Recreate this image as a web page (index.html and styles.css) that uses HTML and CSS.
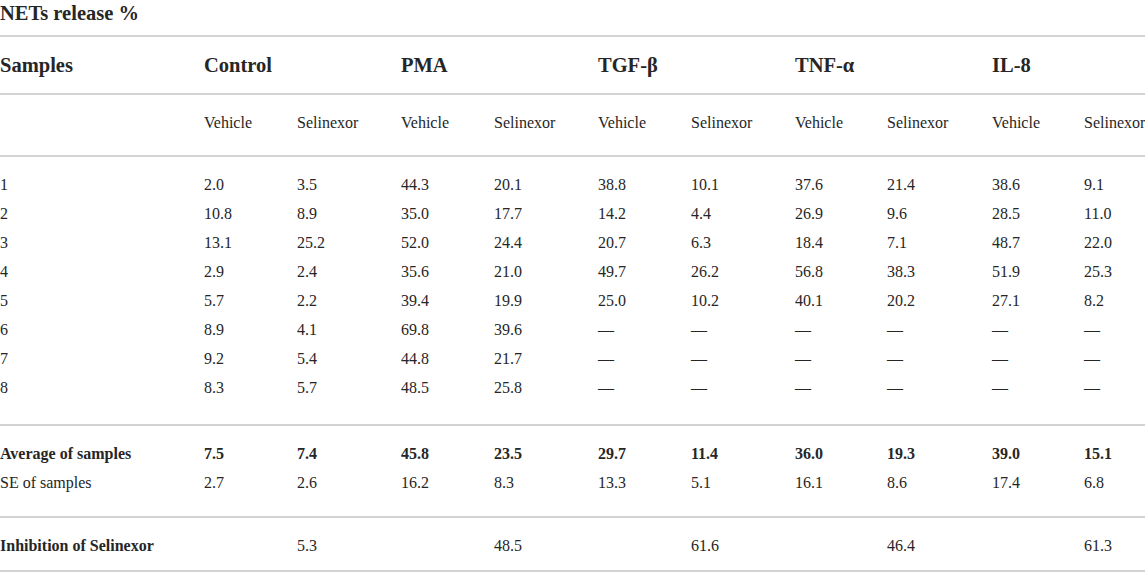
FILE: index.html
```html
<!DOCTYPE html>
<html>
<head>
<meta charset="utf-8">
<link rel="stylesheet" href="styles.css">
</head>
<body>
<div class="wrap">
  <div class="title">NETs release %</div>
  <table class="tbl">
    <colgroup>
      <col class="c0"><col class="cv"><col class="cs"><col class="cv"><col class="cs"><col class="cv"><col class="cs"><col class="cv2"><col class="cs2"><col class="cv2"><col class="clast">
    </colgroup>
    <thead>
      <tr class="head">
        <th>Samples</th>
        <th colspan="2">Control</th>
        <th colspan="2">PMA</th>
        <th colspan="2">TGF-β</th>
        <th colspan="2">TNF-α</th>
        <th colspan="2">IL-8</th>
      </tr>
      <tr class="sub">
        <td></td>
        <td>Vehicle</td><td>Selinexor</td>
        <td>Vehicle</td><td>Selinexor</td>
        <td>Vehicle</td><td>Selinexor</td>
        <td>Vehicle</td><td>Selinexor</td>
        <td>Vehicle</td><td>Selinexor</td>
      </tr>
    </thead>
    <tbody class="grp data">
      <tr class="first"><td>1</td><td>2.0</td><td>3.5</td><td>44.3</td><td>20.1</td><td>38.8</td><td>10.1</td><td>37.6</td><td>21.4</td><td>38.6</td><td>9.1</td></tr>
      <tr><td>2</td><td>10.8</td><td>8.9</td><td>35.0</td><td>17.7</td><td>14.2</td><td>4.4</td><td>26.9</td><td>9.6</td><td>28.5</td><td>11.0</td></tr>
      <tr><td>3</td><td>13.1</td><td>25.2</td><td>52.0</td><td>24.4</td><td>20.7</td><td>6.3</td><td>18.4</td><td>7.1</td><td>48.7</td><td>22.0</td></tr>
      <tr><td>4</td><td>2.9</td><td>2.4</td><td>35.6</td><td>21.0</td><td>49.7</td><td>26.2</td><td>56.8</td><td>38.3</td><td>51.9</td><td>25.3</td></tr>
      <tr><td>5</td><td>5.7</td><td>2.2</td><td>39.4</td><td>19.9</td><td>25.0</td><td>10.2</td><td>40.1</td><td>20.2</td><td>27.1</td><td>8.2</td></tr>
      <tr><td>6</td><td>8.9</td><td>4.1</td><td>69.8</td><td>39.6</td><td>—</td><td>—</td><td>—</td><td>—</td><td>—</td><td>—</td></tr>
      <tr><td>7</td><td>9.2</td><td>5.4</td><td>44.8</td><td>21.7</td><td>—</td><td>—</td><td>—</td><td>—</td><td>—</td><td>—</td></tr>
      <tr class="last"><td>8</td><td>8.3</td><td>5.7</td><td>48.5</td><td>25.8</td><td>—</td><td>—</td><td>—</td><td>—</td><td>—</td><td>—</td></tr>
    </tbody>
    <tbody class="grp stats">
      <tr class="first bold"><td>Average of samples</td><td>7.5</td><td>7.4</td><td>45.8</td><td>23.5</td><td>29.7</td><td>11.4</td><td>36.0</td><td>19.3</td><td>39.0</td><td>15.1</td></tr>
      <tr class="last"><td>SE of samples</td><td>2.7</td><td>2.6</td><td>16.2</td><td>8.3</td><td>13.3</td><td>5.1</td><td>16.1</td><td>8.6</td><td>17.4</td><td>6.8</td></tr>
    </tbody>
    <tbody class="grp inhib">
      <tr class="first last"><td class="b">Inhibition of Selinexor</td><td></td><td>5.3</td><td></td><td>48.5</td><td></td><td>61.6</td><td></td><td>46.4</td><td></td><td>61.3</td></tr>
    </tbody>
  </table>
</div>
</body>
</html>
```

FILE: styles.css
```css
html, body {
  margin: 0;
  padding: 0;
  background: #ffffff;
}
body {
  font-family: "Liberation Serif", "Times New Roman", serif;
  color: #262626;
  overflow: hidden;
}
.wrap {
  width: 1145px;
}
.title {
  font-size: 20.5px;
  font-weight: bold;
  line-height: 26px;
  height: 35px;
  border-bottom: 2px solid #d3d3d3;
}
.tbl {
  border-collapse: collapse;
  table-layout: fixed;
  width: 1145px;
}
.c0 { width: 204px; }
.cv { width: 93px; }
.cs { width: 104px; }
.cv2 { width: 92px; }
.cs2 { width: 105px; }
.clast { width: 61px; }
.tbl th, .tbl td {
  padding: 0;
  text-align: left;
  vertical-align: top;
  white-space: nowrap;
  font-size: 16px;
  line-height: 29px;
  font-weight: normal;
}
.head th {
  font-size: 20.5px;
  font-weight: bold;
  height: 56px;
  line-height: 56px;
  border-bottom: 2px solid #d3d3d3;
}
.sub td {
  padding-top: 13px;
  padding-bottom: 18px;
  border-bottom: 2px solid #d3d3d3;
}
.grp .first td {
  padding-top: 13px;
}
.data .last td {
  padding-bottom: 22px;
}
.stats .last td {
  padding-bottom: 19px;
}
.inhib .last td {
  padding-bottom: 10px;
}
.grp tr.last td {
  border-bottom: 2px solid #d3d3d3;
}
.bold td, .tbl td.b {
  font-weight: bold;
}
```
